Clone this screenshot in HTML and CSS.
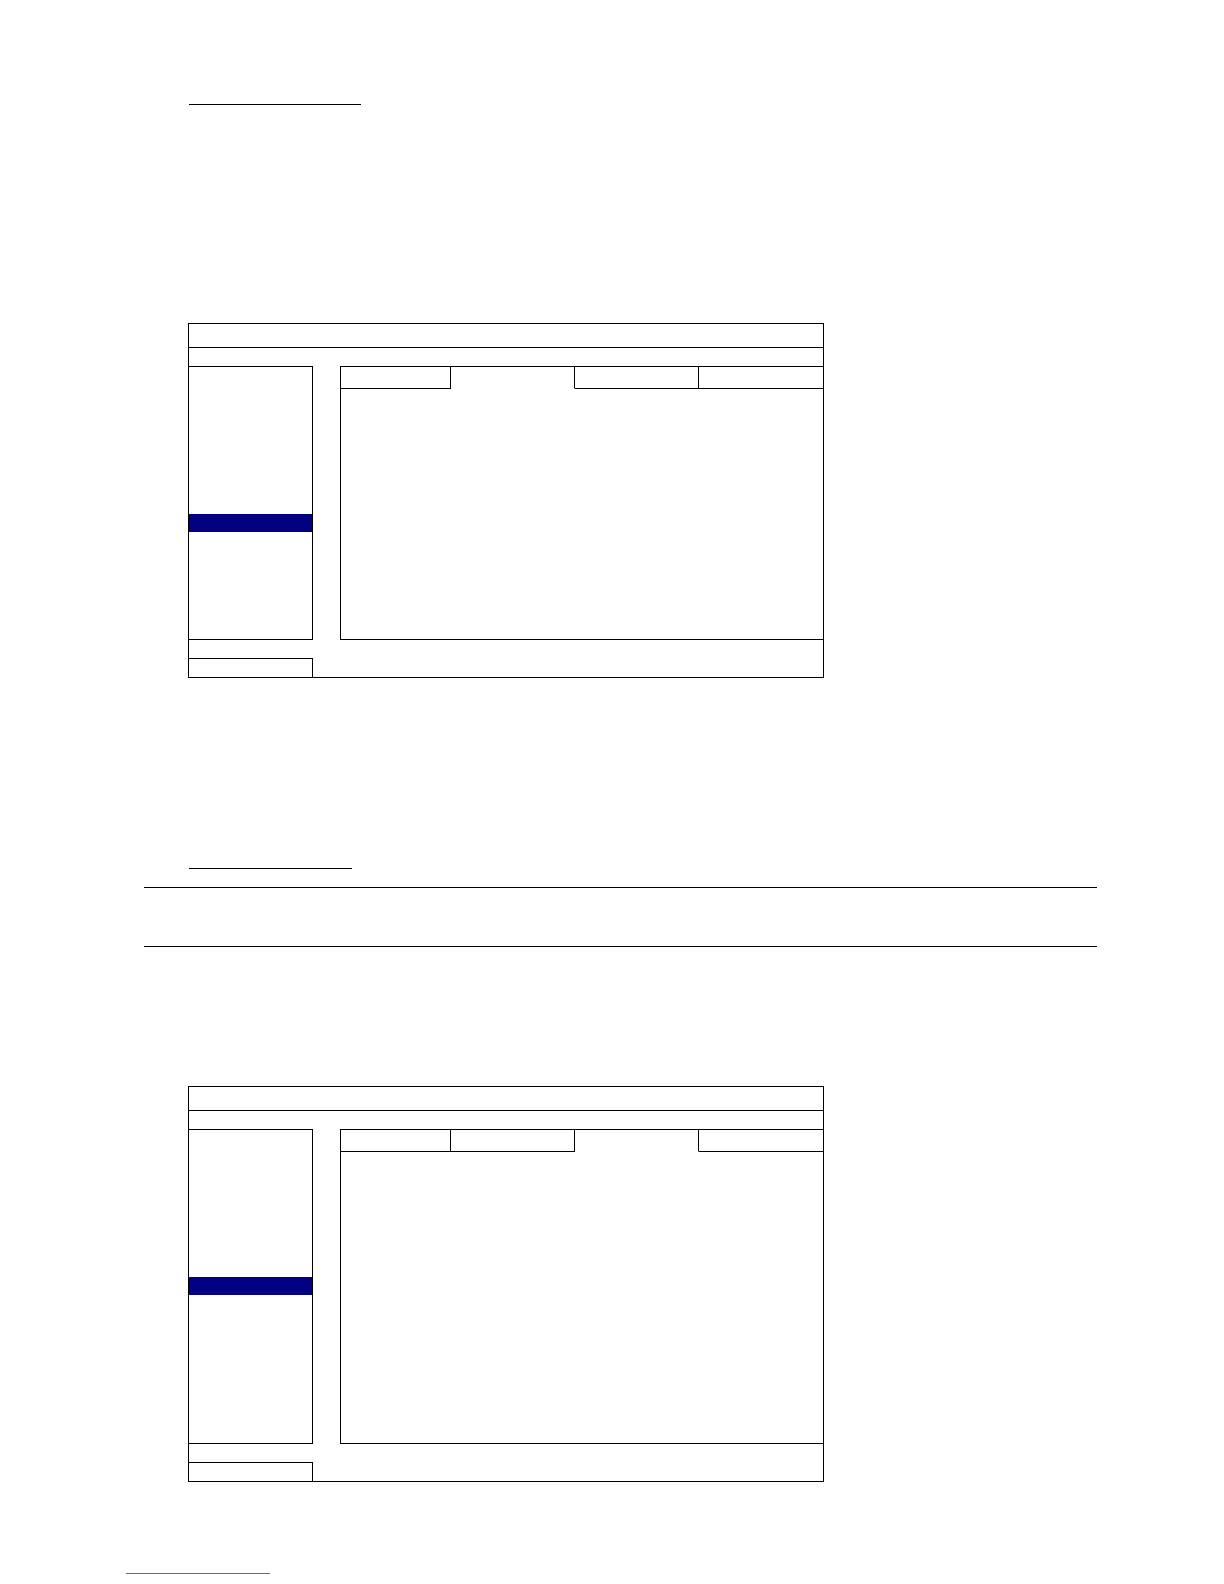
FILE: index.html
```html
<!DOCTYPE html>
<html>
<head>
<meta charset="utf-8">
<link rel="stylesheet" href="styles.css">
</head>
<body>
<div class="page">
  <div class="underline u1"></div>

  <div class="screen s1">
    <div class="titlebar"></div>
    <div class="body-row">
      <div class="side"><div class="sel"></div></div>
      <div class="main">
        <div class="tabs">
          <div class="tab t1"></div>
          <div class="tab t2 active"></div>
          <div class="tab t3"></div>
          <div class="tab t4"></div>
        </div>
        <div class="content"></div>
      </div>
    </div>
    <div class="foot"><div class="foot-box"></div></div>
  </div>

  <div class="underline u2"></div>
  <div class="rule r1"></div>
  <div class="rule r2"></div>

  <div class="screen s2">
    <div class="titlebar"></div>
    <div class="body-row">
      <div class="side"><div class="sel"></div></div>
      <div class="main">
        <div class="tabs">
          <div class="tab t1"></div>
          <div class="tab t2"></div>
          <div class="tab t3 active"></div>
          <div class="tab t4"></div>
        </div>
        <div class="content"></div>
      </div>
    </div>
    <div class="foot"><div class="foot-box"></div></div>
  </div>

  <div class="link-line"></div>
</div>
</body>
</html>
```

FILE: styles.css
```css
html, body {
  margin: 0;
  padding: 0;
  background: #ffffff;
  font-family: "Liberation Sans", Arial, sans-serif;
}
.page {
  width: 1224px;
  min-height: 1584px;
  display: flow-root;
}
.underline {
  height: 0;
  border-top: 1px solid #000;
}
.u1 {
  margin: 104px 0 0 189px;
  width: 172px;
}
.u2 {
  margin: 190px 0 0 189px;
  width: 163px;
}
.rule {
  height: 0;
  border-top: 1px solid #000;
  margin-left: 144px;
  width: 953px;
}
.r1 { margin-top: 18px; }
.r2 { margin-top: 58px; }

.screen {
  box-sizing: border-box;
  margin-left: 188px;
  width: 636px;
  border: 1px solid #000;
  display: flex;
  flex-direction: column;
}
.s1 { margin-top: 218px; }
.s2 { margin-top: 139px; }

.titlebar {
  height: 23px;
  border-bottom: 1px solid #000;
}
.body-row {
  margin-top: 18px;
  display: flex;
  gap: 27px;
}
.side {
  box-sizing: border-box;
  width: 124px;
  border-top: 1px solid #000;
  border-right: 1px solid #000;
  border-bottom: 1px solid #000;
}
.s1 .side, .s1 .main { height: 274px; }
.s2 .side, .s2 .main { height: 315px; }
.sel {
  margin-top: 147px;
  height: 18px;
  background: #000080;
}
.main {
  box-sizing: border-box;
  flex: 1;
  border-left: 1px solid #000;
  border-bottom: 1px solid #000;
  display: flex;
  flex-direction: column;
}
.tabs {
  display: flex;
  height: 23px;
}
.tab {
  box-sizing: border-box;
  height: 23px;
  border-top: 1px solid #000;
  border-bottom: 1px solid #000;
  border-right: 1px solid #000;
}
.tab.active { border-bottom-color: transparent; }
.t1 { width: 110px; }
.t2 { width: 124px; }
.t3 { width: 124px; }
.t4 { width: 124px; border-right: 0; }
.content { flex: 1; }

.foot {
  margin-top: 18px;
  display: flex;
}
.foot-box {
  box-sizing: border-box;
  width: 124px;
  height: 19px;
  border-top: 1px solid #000;
  border-right: 1px solid #000;
}
.link-line {
  margin: 91px 0 0 126px;
  width: 144px;
  height: 0;
  border-top: 1px solid #4a6ad8;
}
```
